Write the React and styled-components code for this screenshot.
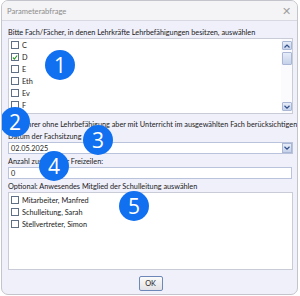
import React from "react";
import styled, { createGlobalStyle } from "styled-components";

const Global = createGlobalStyle`
  html, body { margin: 0; padding: 0; background: #ffffff; }
  body { font-family: Lato, "Open Sans", sans-serif; }
`;

const Window = styled.div`
  position: relative;
  box-sizing: border-box;
  margin: 0 0 0 1px;
  width: 297px;
  height: 295px;
  border: 1px solid #c4c4cc;
  border-radius: 7px;
  background: #f0f0fa;
  overflow: hidden;
  display: flex;
  flex-direction: column;
`;

const TitleBar = styled.div`
  height: 19px;
  flex: none;
  display: flex;
  align-items: center;
  justify-content: space-between;
  padding: 0 6px 0 5px;
  background: #f4f4f6;
  border-bottom: 1px solid #d8d8e2;
  color: #8c8c8c;
  font-size: 7.6px;
`;

const Close = styled.span`
  font-size: 11px;
  color: #a0a0a0;
  line-height: 1;
`;

const Body = styled.div`
  flex: 1;
  display: flex;
  flex-direction: column;
  padding: 6px 4px 0 6px;
  font-size: 7.3px;
  color: #1a1a1a;
`;

const Label = styled.div`
  height: 11px;
  line-height: 11px;
  white-space: nowrap;
  margin-top: ${(p) => p.$mt || 0}px;
`;

const ListBox = styled.div`
  box-sizing: border-box;
  height: ${(p) => p.$h}px;
  border: 1px solid #c9cbd6;
  background: #ffffff;
  display: flex;
  padding-top: ${(p) => p.$pt || 0}px;
`;

const Items = styled.div`
  flex: 1;
  overflow: hidden;
  display: flex;
  flex-direction: column;
`;

const Row = styled.div`
  height: 12px;
  flex: none;
  display: flex;
  align-items: center;
  gap: 3px;
  padding-left: 2px;
  white-space: nowrap;
`;

const Box = styled.span`
  box-sizing: border-box;
  width: 8px;
  height: 8px;
  flex: none;
  border: 1px solid #5f6f86;
  background: #ffffff;
  display: inline-flex;
  align-items: center;
  justify-content: center;
`;

const Scrollbar = styled.div`
  width: 11px;
  flex: none;
  display: flex;
  flex-direction: column;
  align-items: center;
  padding: 2px 0;
  gap: 2px;
  background: #fbfbfe;
`;

const ScrollBtn = styled.div`
  box-sizing: border-box;
  width: 10px;
  height: ${(p) => p.$h || 9}px;
  border: 1px solid #a9b7d4;
  border-radius: 1px;
  background: linear-gradient(#e6ecf8, #c6d2ea);
  display: flex;
  align-items: center;
  justify-content: center;
  margin-top: ${(p) => (p.$bottom ? "auto" : "0")};
`;

const CheckRow = styled.div`
  height: 12px;
  display: flex;
  align-items: center;
  gap: 3px;
  margin-top: 4px;
  padding-left: 1px;
  white-space: nowrap;
`;

const Field = styled.div`
  box-sizing: border-box;
  height: 12px;
  border: 1px solid #b9c4dc;
  background: #ffffff;
  display: flex;
  align-items: center;
  padding-left: 2px;
  margin-right: ${(p) => p.$mr || 0}px;
`;

const FieldText = styled.span`
  flex: 1;
`;

const DropBtn = styled.div`
  box-sizing: border-box;
  width: 10px;
  height: 10px;
  border: 1px solid #a9b7d4;
  background: linear-gradient(#e6ecf8, #c6d2ea);
  display: flex;
  align-items: center;
  justify-content: center;
`;

const Footer = styled.div`
  display: flex;
  justify-content: center;
  padding-top: 6px;
`;

const OkButton = styled.button`
  box-sizing: border-box;
  width: 24px;
  height: 15px;
  padding: 0;
  border: 1px solid #6d88b8;
  border-radius: 2px;
  background: linear-gradient(#fbfbfb, #e2e2e6);
  font-family: Lato, sans-serif;
  font-size: 7.3px;
  color: #1a1a1a;
`;

const Badge = styled.div`
  position: absolute;
  left: ${(p) => p.$x - 15}px;
  top: ${(p) => p.$y - 15}px;
  width: 30px;
  height: 30px;
  border-radius: 50%;
  background: #1170f0;
  color: #ffffff;
  font-family: "Open Sans", sans-serif;
  font-size: 21px;
  line-height: 30px;
  text-align: center;
`;

const Chevron = ({ up }) => (
  <svg width="6" height="4" viewBox="0 0 6 4">
    <path
      d={up ? "M0.5 3.5 L3 1 L5.5 3.5" : "M0.5 0.8 L3 3.2 L5.5 0.8"}
      fill="none"
      stroke="#33508a"
      strokeWidth="1.2"
    />
  </svg>
);

const Check = () => (
  <svg width="7" height="7" viewBox="0 0 7 7">
    <path d="M1 3.5 L2.8 5.3 L6 1.2" fill="none" stroke="#2a9a2a" strokeWidth="1.3" />
  </svg>
);

const subjects = [
  { n: "C" },
  { n: "D", c: true },
  { n: "E" },
  { n: "Eth" },
  { n: "Ev" },
  { n: "F" },
  { n: "G" },
];

const people = ["Mitarbeiter, Manfred", "Schulleitung, Sarah", "Stellvertreter, Simon"];

export default function App() {
  return (
    <>
      <Global />
      <Window>
        <TitleBar>
          <span>Parameterabfrage</span>
          <Close>✕</Close>
        </TitleBar>
        <Body>
          <Label>Bitte Fach/Fächer, in denen Lehrkräfte Lehrbefähigungen besitzen, auswählen</Label>
          <ListBox $h={76} $pt={0}>
            <Items>
              {subjects.map((s) => (
                <Row key={s.n}>
                  <Box>{s.c && <Check />}</Box>
                  <span>{s.n}</span>
                </Row>
              ))}
            </Items>
            <Scrollbar>
              <ScrollBtn><Chevron up /></ScrollBtn>
              <ScrollBtn $h={13} />
              <ScrollBtn $bottom><Chevron /></ScrollBtn>
            </Scrollbar>
          </ListBox>
          <CheckRow>
            <Box />
            <span>Lehrer ohne Lehrbefähigung aber mit Unterricht im ausgewählten Fach berücksichtigen</span>
          </CheckRow>
          <Label $mt={1}>Datum der Fachsitzung</Label>
          <Field>
            <FieldText>02.05.2025</FieldText>
            <DropBtn><Chevron /></DropBtn>
          </Field>
          <Label $mt={2}>Anzahl zusätzlicher Freizeilen:</Label>
          <Field $mr={1}>
            <FieldText>0</FieldText>
          </Field>
          <Label $mt={2}>Optional: Anwesendes Mitglied der Schulleitung auswählen</Label>
          <ListBox $h={78} $pt={1}>
            <Items>
              {people.map((p) => (
                <Row key={p}>
                  <Box />
                  <span>{p}</span>
                </Row>
              ))}
            </Items>
          </ListBox>
          <Footer>
            <OkButton>OK</OkButton>
          </Footer>
        </Body>
        <Badge $x={58} $y={64}>1</Badge>
        <Badge $x={13} $y={121}>2</Badge>
        <Badge $x={96} $y={139}>3</Badge>
        <Badge $x={52} $y={165}>4</Badge>
        <Badge $x={132} $y={205}>5</Badge>
      </Window>
    </>
  );
}
